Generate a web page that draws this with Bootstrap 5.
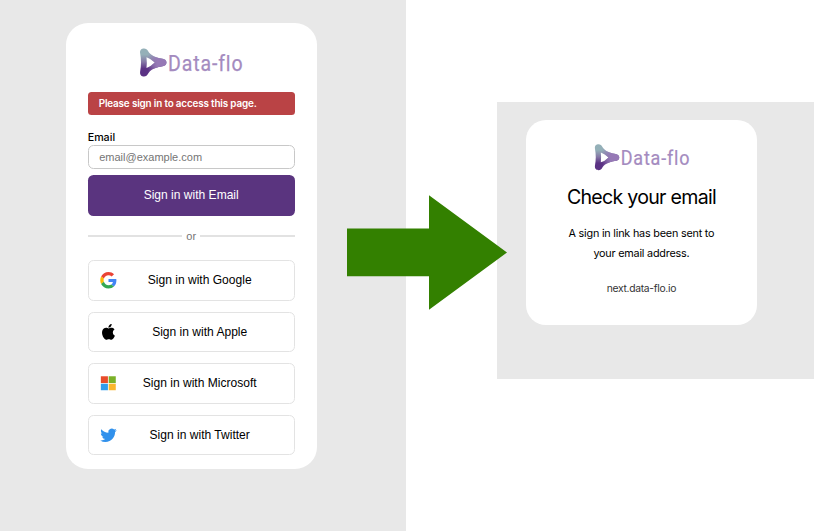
<!DOCTYPE html>
<html lang="en">
<head>
<meta charset="utf-8">
<meta name="viewport" content="width=device-width, initial-scale=1">
<title>Data-flo sign in</title>
<link href="https://cdn.jsdelivr.net/npm/bootstrap@5.3.0/dist/css/bootstrap.min.css" rel="stylesheet">
<style>
body{font-family:Inter,"Liberation Sans",sans-serif;color:#000;background:#fff;width:817px;height:531px}
.panel{background:#e8e8e8}
.panel-login{width:406.3px;height:531px;padding:22.5px 0 0 66px}
.panel-sent{width:317px;height:276.5px;margin:102.4px 0 0 90.7px;padding:17.5px 0 0 28.7px}
.sheet{background:#fff}
.sheet-login{width:250.7px;height:446px;border-radius:22px;padding:25.5px 22px 0 21.7px}
.sheet-sent{width:231.5px;height:205px;border-radius:20px;padding-top:24px}
.logo{overflow:visible}
.logo text{font-family:Roboto,"Liberation Sans",sans-serif;font-variant-ligatures:none;letter-spacing:1px;fill:#a48bbf;stroke:#a48bbf;stroke-width:.25px}
.notice{background:#ba4345;color:#fff;height:23px;border-radius:3.5px;font-size:9.9px;line-height:23px;font-weight:600;letter-spacing:-.16px;padding:0 11px;margin:15px 0 16px;white-space:nowrap}
.mail-label{font-size:10.7px;font-weight:500;line-height:14px;margin-bottom:.3px}
.mail-input{height:23.5px;border:1px solid #c8c8c8;border-radius:5.5px;padding:0 10.5px;font:11px "Liberation Sans",Arial,sans-serif;color:#000}
.mail-input::placeholder{color:#757575;opacity:1}
.btn-wide{width:100%;height:40.5px;border-radius:5.5px;font:12.05px "Liberation Sans",Arial,sans-serif;padding:0;white-space:nowrap}
.btn-mail,.btn-mail:hover{background:#5a347f;color:#fff;border:0;margin-top:6px;height:40.8px}
.or-row{height:14px;margin:13.5px 0 17.1px;font:11px/14px "Liberation Sans",Arial,sans-serif;color:#757575}
.rule{height:1.5px;background:#e2e2e2}
.btn-provider,.btn-provider:hover{border:1.2px solid #e3e3e3;background:#fff;color:#000;padding:0 0 0 11px}
.btn-provider svg{width:17px;height:16.5px}
.btn-provider .icon-apple{height:15.8px}
.btn-provider span{padding-right:11px}
.providers{gap:11px}
.sent-title{font-size:19.6px;font-weight:400;line-height:24px;letter-spacing:-.73px;margin:14px 0 15px}
.sent-text{font-size:10.8px;line-height:20px;letter-spacing:-.2px;margin:0 0 14px}
.sent-host{font-size:10.3px;line-height:20px;letter-spacing:-.3px;color:#333}
.arrow{left:347px;top:195px;width:160px;height:115px}
</style>
</head>
<body class="overflow-hidden position-relative">
<svg class="position-absolute" width="0" height="0" aria-hidden="true">
  <defs>
    <linearGradient id="edge" x1="0" y1="0" x2="0" y2="1"><stop offset=".22" stop-color="#94b0b8"/><stop offset=".48" stop-color="#8578a6"/><stop offset=".72" stop-color="#5b3284"/></linearGradient>
    <linearGradient id="nose" x1="0" y1="0" x2="1" y2="0"><stop offset=".3" stop-color="#9679b6" stop-opacity="0"/><stop offset=".65" stop-color="#9679b6"/></linearGradient>
    <path id="mark" fill-rule="evenodd" d="M.6 5C.2 1.700 2.200.4 4.500.4 6.500.4 7.700 1.400 8.700 3.200 10.500 6.400 14 8.900 22 10.500 25.200 11 27 12.300 27 14.600S25.200 18 22 18.500C14 20 10.500 22.300 8.700 25.600 7.700 27.500 6.500 28.500 4.500 28.500 2.200 28.500.2 27 .6 23.700 1.800 17.500 1.800 11.500.6 5ZM7 9.200Q7.600 14.500 7 19.900 11.500 18.500 15.300 14.600 11.500 10.600 7 9.200Z"/>
  </defs>
</svg>
<div class="d-flex align-items-start">
  <section class="panel panel-login flex-shrink-0">
    <main class="sheet sheet-login">
      <svg class="logo d-block mx-auto" width="106" height="29" viewBox="-1.500 0 106 29">
        <use href="#mark" fill="url(#edge)"/><use href="#mark" fill="url(#nose)"/>
        <text x="28.500" y="22.800" font-size="22" textLength="75.500" lengthAdjust="spacingAndGlyphs">Data-flo</text>
      </svg>
      <div class="notice">Please sign in to access this page.</div>
      <label class="mail-label d-block" for="mail">Email</label>
      <input id="mail" type="email" class="mail-input d-block w-100" placeholder="email@example.com">
      <button class="btn btn-wide btn-mail">Sign in with Email</button>
      <div class="or-row d-flex align-items-center gap-1"><div class="rule flex-fill"></div><span>or</span><div class="rule flex-fill"></div></div>
      <div class="providers d-flex flex-column">
        <button class="btn btn-wide btn-provider d-flex align-items-center">
          <svg viewBox="0 0 48 48"><path fill="#EA4335" d="M24 9.500c3.540 0 6.710 1.220 9.210 3.600l6.850-6.850C35.900 2.380 30.470 0 24 0 14.620 0 6.510 5.380 2.560 13.220l7.980 6.190C12.430 13.720 17.740 9.500 24 9.500z"/><path fill="#4285F4" d="M46.980 24.550c0-1.570-.15-3.090-.38-4.550H24v9.020h12.940c-.58 2.960-2.260 5.480-4.780 7.180l7.730 6c4.510-4.180 7.090-10.360 7.090-17.650z"/><path fill="#FBBC05" d="M10.530 28.590c-.48-1.450-.76-2.990-.76-4.590s.27-3.140.76-4.590l-7.980-6.190C.92 16.460 0 20.120 0 24s.92 7.540 2.560 10.780l7.970-6.190z"/><path fill="#34A853" d="M24 48c6.480 0 11.930-2.130 15.890-5.810l-7.730-6c-2.150 1.450-4.920 2.300-8.160 2.300-6.260 0-11.570-4.220-13.470-9.910l-7.980 6.190C6.510 42.620 14.620 48 24 48z"/></svg>
          <span class="flex-fill">Sign in with Google</span></button>
        <button class="btn btn-wide btn-provider d-flex align-items-center">
          <svg class="icon-apple" viewBox="0 0 24 24"><path d="M12.150 6.900c-.95 0-2.420-1.080-3.960-1.040-2.040.03-3.910 1.180-4.960 3.010-2.120 3.680-.55 9.100 1.520 12.090 1.010 1.450 2.210 3.090 3.790 3.040 1.520-.07 2.090-.99 3.940-.99 1.830 0 2.350.99 3.960.95 1.640-.03 2.680-1.480 3.680-2.950 1.160-1.690 1.640-3.330 1.660-3.420-.04-.01-3.180-1.220-3.220-4.860-.03-3.040 2.480-4.490 2.600-4.560-1.430-2.090-3.620-2.320-4.390-2.380-2-.16-3.680 1.090-4.610 1.090zM15.530 3.830c.84-1.010 1.400-2.430 1.250-3.830-1.210.05-2.660.81-3.530 1.820-.78.900-1.450 2.340-1.270 3.710 1.340.100 2.720-.69 3.560-1.700"/></svg>
          <span class="flex-fill">Sign in with Apple</span></button>
        <button class="btn btn-wide btn-provider d-flex align-items-center">
          <svg viewBox="0 0 17 17"><path fill="#e84c2b" d="M.6 1.300h7.300v7H.6z"/><path fill="#7bb128" d="M8.700 1.300H16v7H8.700z"/><path fill="#319ced" d="M.6 9h7.300v6.700H.6z"/><path fill="#fbb62d" d="M8.700 9H16v6.700H8.700z"/></svg>
          <span class="flex-fill">Sign in with Microsoft</span></button>
        <button class="btn btn-wide btn-provider d-flex align-items-center">
          <svg viewBox="0 0 24 24"><path fill="#3191ec" d="M23.950 4.570a10 10 0 0 1-2.820.77 4.960 4.960 0 0 0 2.160-2.720c-.95.550-2 .950-3.130 1.180a4.920 4.920 0 0 0-8.380 4.480C7.690 8.090 4.070 6.130 1.640 3.160a4.820 4.820 0 0 0-.67 2.480c0 1.710.87 3.210 2.190 4.100a4.900 4.900 0 0 1-2.230-.62v.06a4.920 4.920 0 0 0 3.950 4.830 5 5 0 0 1-2.210.08 4.940 4.940 0 0 0 4.600 3.420A9.870 9.870 0 0 1 0 19.540a14 14 0 0 0 7.550 2.210c9.050 0 14-7.500 14-13.980 0-.21 0-.42-.02-.63a9.940 9.940 0 0 0 2.460-2.550z"/></svg>
          <span class="flex-fill">Sign in with Twitter</span></button>
      </div>
    </main>
  </section>
  <section class="panel panel-sent flex-shrink-0">
    <div class="sheet sheet-sent text-center">
      <svg class="logo d-block mx-auto" width="97.800" height="26.770" viewBox="-1.500 0 106 29">
        <use href="#mark" fill="url(#edge)"/><use href="#mark" fill="url(#nose)"/>
        <text x="28.500" y="22.800" font-size="22" textLength="75.500" lengthAdjust="spacingAndGlyphs">Data-flo</text>
      </svg>
      <h1 class="sent-title">Check your email</h1>
      <p class="sent-text">A sign in link has been sent to<br>your email address.</p>
      <div class="sent-host">next.data-flo.io</div>
    </div>
  </section>
</div>
<svg class="arrow position-absolute" viewBox="0 0 160 115"><path fill="#338000" d="M0 33.500H82V.3L160 57.500 82 114.700V81.300H0Z"/></svg>
<script src="https://cdn.jsdelivr.net/npm/bootstrap@5.3.0/dist/js/bootstrap.bundle.min.js"></script>
</body>
</html>
